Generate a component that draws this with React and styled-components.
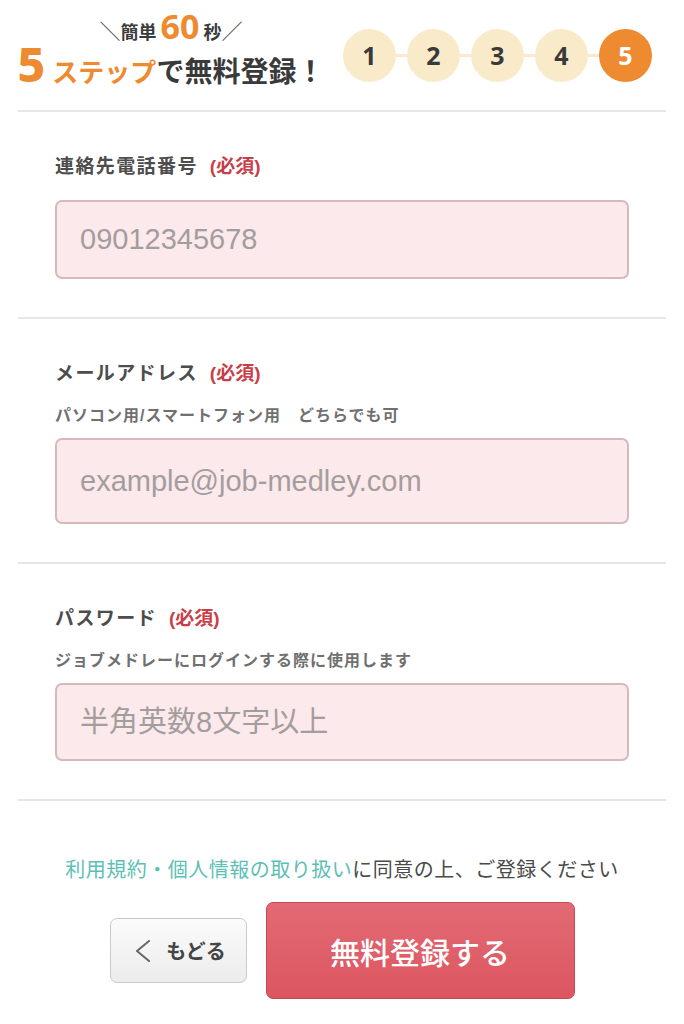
import React from "react";
import styled, { createGlobalStyle } from "styled-components";

const ORANGE = "#ee8a30";
const CREAM = "#f9ebca";

const GlobalStyle = createGlobalStyle`
  html, body {
    margin: 0;
    padding: 0;
    background: #fff;
  }
  body {
    font-family: "Liberation Sans", "Noto Sans CJK JP", sans-serif;
    color: #4a4a4a;
  }
  * {
    box-sizing: border-box;
  }
`;

const steps = [1, 2, 3, 4, 5];

const fields = [
  {
    id: "tel",
    label: "連絡先電話番号",
    placeholder: "09012345678",
    height: 79,
  },
  {
    id: "email",
    label: "メールアドレス",
    note: "パソコン用/スマートフォン用　どちらでも可",
    placeholder: "example@job-medley.com",
    height: 86,
  },
  {
    id: "password",
    label: "パスワード",
    note: "ジョブメドレーにログインする際に使用します",
    placeholder: "半角英数8文字以上",
    height: 78,
  },
];

export default function App() {
  return (
    <Page>
      <GlobalStyle />
      <Header>
        <Title>
          <Catch>
            <Slash>＼</Slash>
            <CatchText>簡単</CatchText>
            <CatchNumber>60</CatchNumber>
            <CatchText>秒</CatchText>
            <Slash>／</Slash>
          </Catch>
          <Headline>
            <BigFive>5</BigFive>
            <OrangeWord>ステップ</OrangeWord>
            <DarkWord>で無料登録！</DarkWord>
          </Headline>
        </Title>
        <Steps>
          {steps.map((n) => (
            <React.Fragment key={n}>
              {n > 1 && <Connector />}
              <Step active={n === 5}>{n}</Step>
            </React.Fragment>
          ))}
        </Steps>
      </Header>
      <Divider />

      {fields.map((field) => (
        <React.Fragment key={field.id}>
          <Section>
            <Label>
              {field.label}
              <Required>(必須)</Required>
            </Label>
            {field.note && <Note>{field.note}</Note>}
            <Input
              $height={field.height}
              $spaced={!field.note}
              placeholder={field.placeholder}
            />
          </Section>
          <Divider />
        </React.Fragment>
      ))}

      <Footer>
        <Agreement>
          <TermsLink>利用規約・個人情報の取り扱い</TermsLink>に同意の上、ご登録ください
        </Agreement>
        <Actions>
          <BackButton type="button">
            <svg width="18" height="22" viewBox="0 0 18 22">
              <polyline
                points="15,1 3,11 15,21"
                fill="none"
                stroke="#666"
                strokeWidth="2"
                strokeLinejoin="round"
                strokeLinecap="round"
              />
            </svg>
            もどる
          </BackButton>
          <SubmitButton type="button">無料登録する</SubmitButton>
        </Actions>
      </Footer>
    </Page>
  );
}

const Page = styled.div`
  width: 684px;
  min-height: 1024px;
  background: #fff;
`;

const Header = styled.header`
  display: flex;
  align-items: center;
  height: 110px;
  padding: 0 18px;
`;

const Title = styled.div`
  display: flex;
  flex-direction: column;
  align-items: center;
  align-self: flex-start;
  flex-shrink: 0;
  width: 306px;
  padding-top: 8px;
  white-space: nowrap;
`;

const Catch = styled.div`
  display: flex;
  align-items: baseline;
  height: 36px;
  color: #3c3c3c;
  font-family: "Noto Sans CJK JP", sans-serif;
  font-weight: 700;
`;

const Slash = styled.span`
  font-size: 21px;
  font-weight: 400;
  margin: 0 -2px;
`;

const CatchText = styled.span`
  font-size: 18px;
  margin: 0 2px;
`;

const CatchNumber = styled.span`
  font-family: "Noto Sans", "Liberation Sans", sans-serif;
  font-size: 34px;
  line-height: 36px;
  color: ${ORANGE};
  margin: 0 2px;
`;

const Headline = styled.div`
  display: flex;
  align-items: baseline;
  font-family: "Noto Sans CJK JP", sans-serif;
  font-weight: 700;
  line-height: 40px;
`;

const BigFive = styled.span`
  font-family: "Noto Sans", "Liberation Sans", sans-serif;
  font-size: 48px;
  font-weight: 800;
  color: ${ORANGE};
  margin-right: 7px;
`;

const OrangeWord = styled.span`
  font-size: 26px;
  color: ${ORANGE};
`;

const DarkWord = styled.span`
  font-size: 28px;
  color: #3a3a3a;
`;

const Steps = styled.div`
  display: flex;
  align-items: center;
  flex-shrink: 0;
  margin-left: 19px;
`;

const Step = styled.div`
  display: flex;
  align-items: center;
  justify-content: center;
  width: 53px;
  height: 53px;
  border-radius: 50%;
  background: ${(p) => (p.active ? ORANGE : CREAM)};
  color: ${(p) => (p.active ? "#fff" : "#3a3a3a")};
  font-family: "Noto Sans", "Liberation Sans", sans-serif;
  font-size: 25px;
  font-weight: 700;
`;

const Connector = styled.div`
  width: 11px;
  height: 3px;
  background: ${CREAM};
`;

const Divider = styled.hr`
  margin: 0 18px;
  border: 0;
  height: 2px;
  background: #e6e6e6;
`;

const Section = styled.section`
  display: flex;
  flex-direction: column;
  padding: 41px 55px 38px;
`;

const Label = styled.div`
  font-size: 19px;
  line-height: 28px;
  letter-spacing: 1.4px;
  font-weight: 700;
  color: #4d4d4d;
`;

const Required = styled.span`
  color: #c83f49;
  margin-left: 12px;
  letter-spacing: 0;
`;

const Note = styled.div`
  margin-top: 17px;
  font-size: 16px;
  line-height: 22px;
  letter-spacing: 1px;
  font-weight: 700;
  color: #707070;
`;

const Input = styled.input`
  width: 100%;
  height: ${(p) => p.$height}px;
  margin-top: ${(p) => (p.$spaced ? 19 : 11)}px;
  padding: 0 0 0 23px;
  border: 2px solid #d6b9bb;
  border-radius: 7px;
  background: #fce9eb;
  font-family: "Liberation Sans", "Noto Sans CJK JP", sans-serif;
  font-size: 29px;
  color: #444;
  outline: none;

  &::placeholder {
    color: #a39d9e;
  }
`;

const Footer = styled.div`
  display: flex;
  flex-direction: column;
  align-items: center;
  padding-top: 53px;
`;

const Agreement = styled.p`
  margin: 0;
  font-family: "Noto Sans CJK JP", sans-serif;
  font-size: 20px;
  line-height: 30px;
  letter-spacing: 0.5px;
  color: #4a4a4a;
`;

const TermsLink = styled.span`
  color: #5cbfb4;
`;

const Actions = styled.div`
  display: flex;
  align-items: center;
  gap: 19px;
  margin-top: 18px;
`;

const BackButton = styled.button`
  display: flex;
  align-items: center;
  justify-content: center;
  gap: 14px;
  width: 137px;
  height: 65px;
  padding: 0 0 0 4px;
  border: 1.5px solid #c9c9c9;
  border-radius: 7px;
  background: linear-gradient(#fbfbfb, #ececec);
  font-family: "Noto Sans CJK JP", sans-serif;
  font-size: 20px;
  font-weight: 700;
  color: #444;
`;

const SubmitButton = styled.button`
  width: 309px;
  height: 97px;
  border: 1.5px solid #c54852;
  border-radius: 7px;
  background: linear-gradient(#e26a74, #dc5660);
  font-family: "Noto Sans CJK JP", sans-serif;
  font-size: 30px;
  font-weight: 500;
  color: #fff;
`;
